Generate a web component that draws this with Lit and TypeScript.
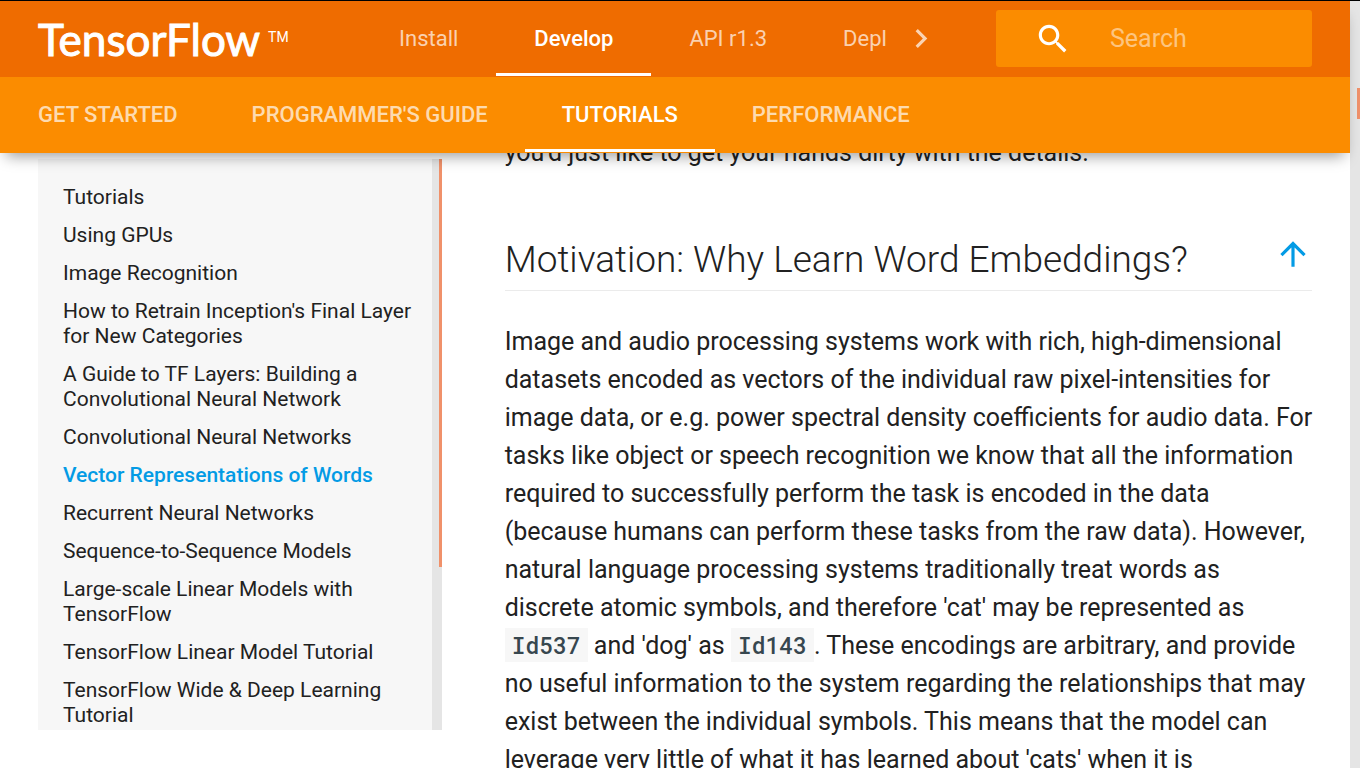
import { LitElement, html, css } from "lit";
import { customElement } from "lit/decorators.js";
import { classMap } from "lit/directives/class-map.js";

interface NavItem {
  label: string;
  active?: boolean;
}

const PRODUCT_TABS: NavItem[] = [
  { label: "Install" },
  { label: "Develop", active: true },
  { label: "API r1.3" },
  { label: "Deploy" },
];

const SECTION_TABS: NavItem[] = [
  { label: "Get Started" },
  { label: "Programmer's Guide" },
  { label: "Tutorials", active: true },
  { label: "Performance" },
];

const TUTORIALS: NavItem[] = [
  { label: "Tutorials" },
  { label: "Using GPUs" },
  { label: "Image Recognition" },
  { label: "How to Retrain Inception's Final Layer for New Categories" },
  { label: "A Guide to TF Layers: Building a Convolutional Neural Network" },
  { label: "Convolutional Neural Networks" },
  { label: "Vector Representations of Words", active: true },
  { label: "Recurrent Neural Networks" },
  { label: "Sequence-to-Sequence Models" },
  { label: "Large-scale Linear Models with TensorFlow" },
  { label: "TensorFlow Linear Model Tutorial" },
  { label: "TensorFlow Wide & Deep Learning Tutorial" },
];

@customElement("site-header")
export class SiteHeader extends LitElement {
  static styles = css`
    :host {
      display: block;
      position: relative;
      z-index: 2;
      box-shadow: 0 9px 14px -6px rgba(0, 0, 0, 0.4);
      color: #fff;
      font-size: 22px;
      line-height: 26px;
    }
    .top,
    .lower {
      display: flex;
      height: 76px;
    }
    .top {
      padding: 0 38px;
      background: #ef6c00;
    }
    .lower {
      padding-left: 1px;
      background: #fb8c00;
    }
    .logo {
      display: flex;
      flex: 0 0 323px;
      align-items: center;
      gap: 8px;
      color: #fff;
      text-decoration: none;
    }
    .wordmark {
      font: 400 44px/48px Lato, sans-serif;
      -webkit-text-stroke: 1px #fff;
    }
    .tm {
      font-size: 14px;
      line-height: 24px;
      margin-bottom: 4px;
    }
    .tabs {
      display: flex;
      min-width: 0;
      overflow: hidden;
    }
    .top .tabs {
      flex: 1;
    }
    .tab {
      box-sizing: border-box;
      flex: none;
      height: 75px;
      padding: 25px 38px 21px;
      border-bottom: 3px solid transparent;
      color: rgba(255, 255, 255, 0.7);
      text-decoration: none;
      white-space: nowrap;
    }
    .lower .tab {
      padding: 25px 37px 21px;
      font-weight: 500;
      text-transform: uppercase;
    }
    .tab.active {
      border-bottom-color: #fff;
      color: #fff;
      font-weight: 500;
    }
    .more {
      display: grid;
      place-items: center;
      flex: 0 0 70px;
      margin-right: 40px;
      padding: 0;
      border: 0;
      background: none;
      color: rgba(255, 255, 255, 0.7);
    }
    .icon {
      width: 38px;
      height: 38px;
      fill: currentColor;
    }
    .search {
      display: flex;
      box-sizing: border-box;
      flex: 0 0 316px;
      min-width: 0;
      align-items: center;
      align-self: flex-start;
      gap: 38px;
      height: 57px;
      margin-top: 9px;
      padding: 0 38px;
      border-radius: 3px;
      background: #fb8c00;
    }
    .search .icon {
      flex: none;
    }
    .field {
      flex: 1;
      min-width: 0;
      padding: 0;
      border: 0;
      outline: 0;
      background: none;
      color: #fff;
      font: inherit;
      font-size: 25px;
      line-height: 38px;
    }
    .field::placeholder {
      color: rgba(255, 255, 255, 0.5);
      opacity: 1;
    }
  `;

  private tab(item: NavItem) {
    return html`<a class=${classMap({ tab: true, active: !!item.active })} href="#">${item.label}</a>`;
  }

  render() {
    return html`
      <div class="top">
        <a class="logo" href="#"><span class="wordmark">TensorFlow</span><span class="tm">TM</span></a>
        <nav class="tabs" aria-label="Site">${PRODUCT_TABS.map((t) => this.tab(t))}</nav>
        <button class="more" type="button" aria-label="More tabs">
          <svg class="icon" viewBox="0 0 24 24"><path d="M8.59 16.34l4.58-4.59-4.58-4.59L10 5.75l6 6-6 6z" /></svg>
        </button>
        <label class="search">
          <svg class="icon" viewBox="0 0 24 24" aria-hidden="true">
            <path d="M15.5 14h-.79l-.28-.27C15.41 12.59 16 11.11 16 9.5 16 5.91 13.09 3 9.5 3S3 5.91 3 9.5 5.91 16 9.5 16c1.61 0 3.09-.59 4.23-1.57l.27.28v.79l5 4.99L20.49 19l-4.99-5zm-6 0C7.01 14 5 11.99 5 9.5S7.01 5 9.5 5 14 7.01 14 9.5 11.99 14 9.5 14z" />
          </svg>
          <input class="field" type="search" placeholder="Search" aria-label="Search" />
        </label>
      </div>
      <nav class="lower" aria-label="Section">${SECTION_TABS.map((t) => this.tab(t))}</nav>
    `;
  }
}

@customElement("side-nav")
export class SideNav extends LitElement {
  static styles = css`
    :host {
      display: grid;
      grid-template-columns: minmax(0, 1fr) 10px;
      grid-template-rows: minmax(0, 1fr);
      overflow: hidden;
      background: #f7f7f7;
      font-size: 21px;
      line-height: 25px;
    }
    .list {
      display: flex;
      flex-direction: column;
      gap: 13px;
      min-height: 0;
      margin: 0;
      padding: 26px 19px 0 25px;
      list-style: none;
    }
    .link {
      color: #212121;
      text-decoration: none;
    }
    .link.active {
      color: #039be5;
      font-weight: 500;
    }
    .track {
      display: flex;
      align-items: flex-start;
      justify-content: flex-end;
      background: #e5e5e5;
    }
    .thumb {
      width: 3px;
      height: 408px;
      background: #f0916a;
    }
  `;

  render() {
    return html`
      <ul class="list">
        ${TUTORIALS.map(
          (t) => html`<li><a class=${classMap({ link: true, active: !!t.active })} href="#">${t.label}</a></li>`
        )}
      </ul>
      <div class="track"><div class="thumb"></div></div>
    `;
  }
}

@customElement("app-root")
export class AppRoot extends LitElement {
  static styles = css`
    :host {
      display: grid;
      grid-template-columns: minmax(0, 1fr) 10px;
      grid-template-rows: minmax(0, 1fr);
      box-sizing: border-box;
      height: 100vh;
      overflow: hidden;
      border-top: 1px solid #000;
      background: #fff;
      color: #212121;
      font-family: Roboto, sans-serif;
    }
    .page {
      display: flex;
      flex-direction: column;
      min-height: 0;
    }
    .body {
      display: grid;
      flex: 1;
      grid-template-columns: minmax(0, 1fr) minmax(0, 2fr);
      grid-template-rows: minmax(0, 1fr);
      gap: 63px;
      min-height: 0;
      padding: 0 38px;
    }
    .side {
      margin: 6px 0 38px;
    }
    .article {
      margin-top: -19px;
      font-size: 25px;
      line-height: 38px;
    }
    .text {
      margin: 0 -2px 0 0;
    }
    .heading {
      display: flex;
      align-items: flex-start;
      justify-content: space-between;
      margin: 63px 0 32px;
      padding-bottom: 5px;
      border-bottom: 1px solid #ebebeb;
    }
    .title {
      margin: 0;
      font-size: 37px;
      font-weight: 300;
      line-height: 50px;
    }
    .up {
      display: block;
      height: 38px;
      color: #039be5;
    }
    .arrow {
      display: block;
      width: 38px;
      height: 38px;
      fill: currentColor;
    }
    .code {
      padding: 2px 7px;
      background: #f7f7f7;
      color: #37474f;
      font: 500 23px/26px "Roboto Mono", "Liberation Mono", monospace;
    }
    .track {
      display: flex;
      align-items: flex-start;
      justify-content: flex-end;
      padding-top: 87px;
      background: #e5e5e5;
    }
    .thumb {
      width: 3px;
      height: 31px;
      background: #f0916a;
    }
  `;

  render() {
    return html`
      <div class="page">
        <site-header></site-header>
        <div class="body">
          <side-nav class="side"></side-nav>
          <main class="article">
            <p class="text">you'd just like to get your hands dirty with the details.</p>
            <div class="heading">
              <h2 class="title">Motivation: Why Learn Word Embeddings?</h2>
              <a class="up" href="#" aria-label="Back to top">
                <svg class="arrow" viewBox="0 0 24 24">
                  <path d="M4 12l1.41 1.41L11 7.83V20h2V7.83l5.58 5.59L20 12l-8-8-8 8z" />
                </svg>
              </a>
            </div>
            <p class="text">
              Image and audio processing systems work with rich, high-dimensional datasets encoded as vectors of the
              individual raw pixel-intensities for image data, or e.g. power spectral density coefficients for audio
              data. For tasks like object or speech recognition we know that all the information required to
              successfully perform the task is encoded in the data (because humans can perform these tasks from the raw
              data). However, natural language processing systems traditionally treat words as discrete atomic symbols,
              and therefore 'cat' may be represented as <code class="code">Id537</code> and 'dog' as
              <code class="code">Id143</code>. These encodings are arbitrary, and provide no useful information to the
              system regarding the relationships that may exist between the individual symbols. This means that the
              model can leverage very little of what it has learned about 'cats' when it is
            </p>
          </main>
        </div>
      </div>
      <div class="track"><div class="thumb"></div></div>
    `;
  }
}
